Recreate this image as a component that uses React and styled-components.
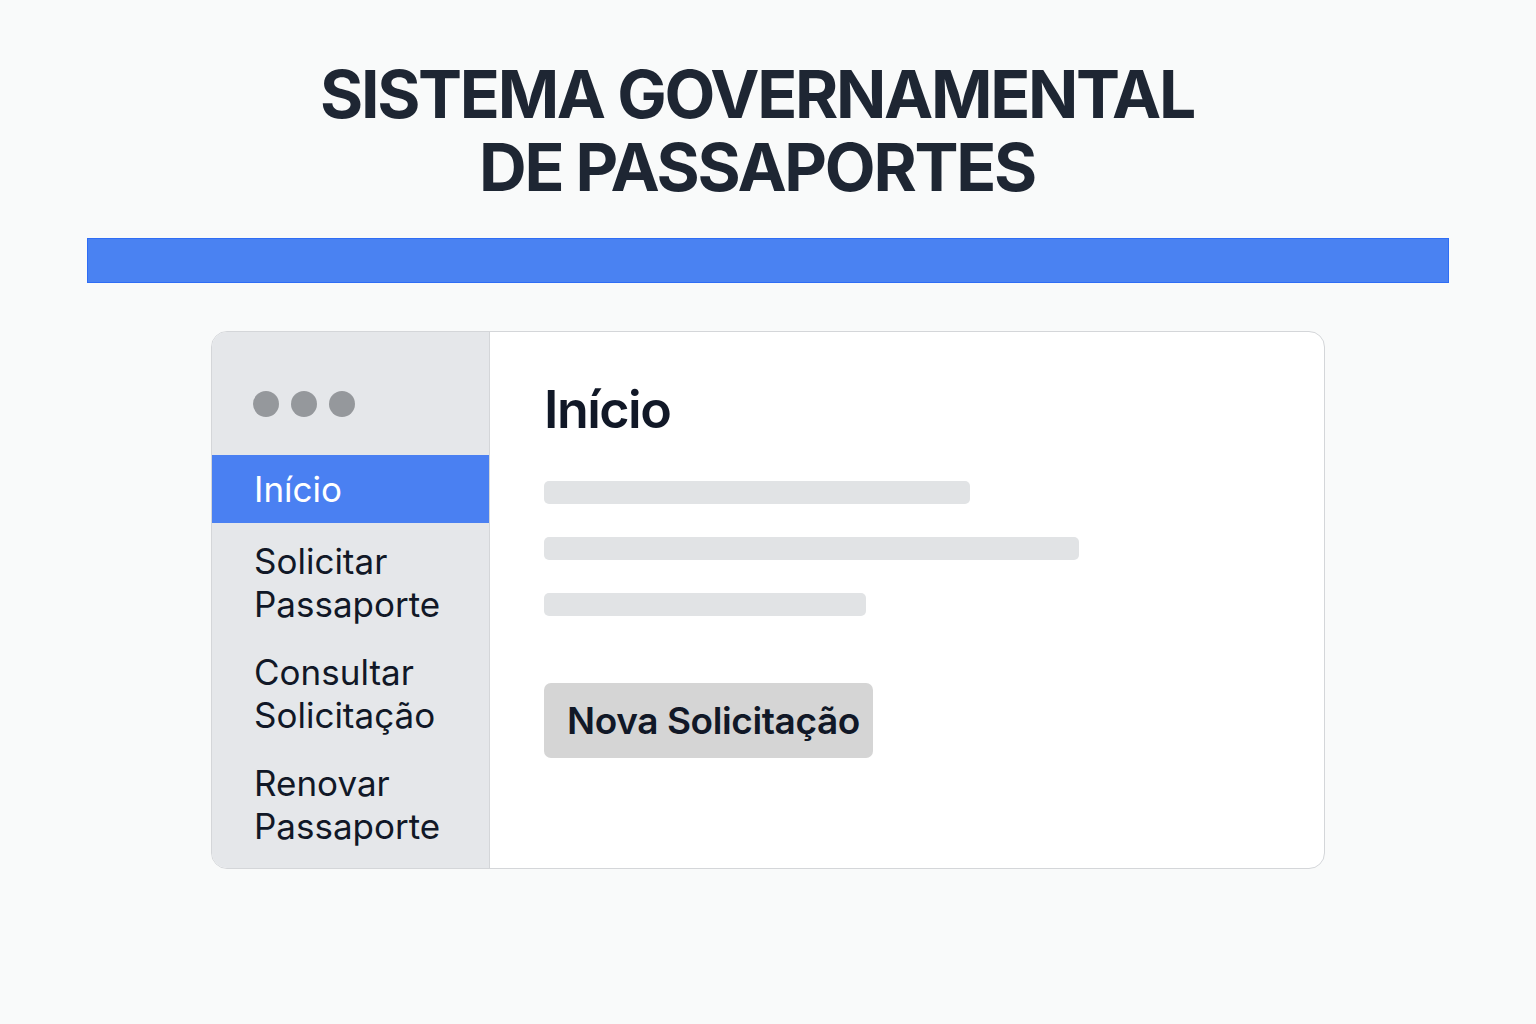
import React from 'react';
import styled, { createGlobalStyle } from 'styled-components';

const GlobalStyle = createGlobalStyle`
  html, body {
    margin: 0;
    padding: 0;
    background: #f9fafa;
  }
  body {
    font-family: Inter, "Noto Sans", "Liberation Sans", sans-serif;
    color: #111827;
  }
`;

const Page = styled.div`
  display: flex;
  flex-direction: column;
  align-items: center;
  padding-top: 58px;
  min-height: 1024px;
  box-sizing: border-box;
`;

const Title = styled.h1`
  margin: 0;
  padding-right: 22px;
  font-size: 66px;
  line-height: 73px;
  font-weight: 700;
  letter-spacing: -2.3px;
  text-align: center;
  color: #1e2633;
`;

const Banner = styled.div`
  align-self: stretch;
  margin: 34px 87px 0;
  height: 43px;
  background: #4a82f2;
  border: 1px solid #2f6df5;
`;

const Window = styled.div`
  margin-top: 48px;
  width: 1112px;
  display: grid;
  grid-template-columns: 278px 1fr;
  background: #ffffff;
  border: 1px solid #d4d6d9;
  border-radius: 16px;
  overflow: hidden;
`;

const Sidebar = styled.nav`
  background: #e5e7ea;
  border-right: 1px solid #d4d6d9;
  display: flex;
  flex-direction: column;
  padding-bottom: 20px;
`;

const Dots = styled.div`
  display: flex;
  gap: 12px;
  padding: 59px 0 38px 41px;
`;

const Dot = styled.span`
  width: 26px;
  height: 26px;
  border-radius: 50%;
  background: #95989c;
`;

const NavList = styled.ul`
  list-style: none;
  margin: 0;
  padding: 0;
  display: flex;
  flex-direction: column;
  gap: 25px;
`;

const NavItem = styled.li`
  padding: 0 20px 0 42px;
  font-size: 35px;
  line-height: 43px;
  font-weight: 400;
  color: ${(p) => (p.$active ? '#ffffff' : '#111827')};
  background: ${(p) => (p.$active ? '#4a80f2' : 'transparent')};
  ${(p) =>
    p.$active &&
    `
    height: 68px;
    display: flex;
    align-items: center;
    margin-bottom: -8px;
  `}
`;

const Content = styled.main`
  padding: 47px 54px 0;
  display: flex;
  flex-direction: column;
  align-items: flex-start;
`;

const Heading = styled.h2`
  margin: 0;
  font-size: 52px;
  line-height: 62px;
  font-weight: 600;
  letter-spacing: -1.5px;
  color: #111827;
`;

const Skeletons = styled.div`
  margin-top: 40px;
  display: flex;
  flex-direction: column;
  gap: 33px;
`;

const Bar = styled.div`
  height: 23px;
  border-radius: 5px;
  background: #e1e3e5;
`;

const Button = styled.button`
  margin-top: 67px;
  width: 329px;
  height: 75px;
  padding: 0 0 0 10px;
  border: none;
  border-radius: 7px;
  background: #d5d5d5;
  font-family: inherit;
  font-size: 37px;
  font-weight: 600;
  letter-spacing: -0.4px;
  color: #111827;
  cursor: pointer;
`;

const navItems = [
  { label: 'Início', active: true },
  { label: ['Solicitar', 'Passaporte'] },
  { label: ['Consultar', 'Solicitação'] },
  { label: ['Renovar', 'Passaporte'] },
];

const bars = [426, 535, 322];

export default function App() {
  return (
    <>
      <GlobalStyle />
      <Page>
        <Title>
          SISTEMA GOVERNAMENTAL
          <br />
          DE PASSAPORTES
        </Title>
        <Banner />
        <Window>
          <Sidebar>
            <Dots>
              <Dot />
              <Dot />
              <Dot />
            </Dots>
            <NavList>
              {navItems.map((item, i) => (
                <NavItem key={i} $active={item.active}>
                  {Array.isArray(item.label) ? (
                    <span>
                      {item.label[0]}
                      <br />
                      {item.label[1]}
                    </span>
                  ) : (
                    item.label
                  )}
                </NavItem>
              ))}
            </NavList>
          </Sidebar>
          <Content>
            <Heading>Início</Heading>
            <Skeletons>
              {bars.map((w) => (
                <Bar key={w} style={{ width: w }} />
              ))}
            </Skeletons>
            <Button>Nova Solicitação</Button>
          </Content>
        </Window>
      </Page>
    </>
  );
}
